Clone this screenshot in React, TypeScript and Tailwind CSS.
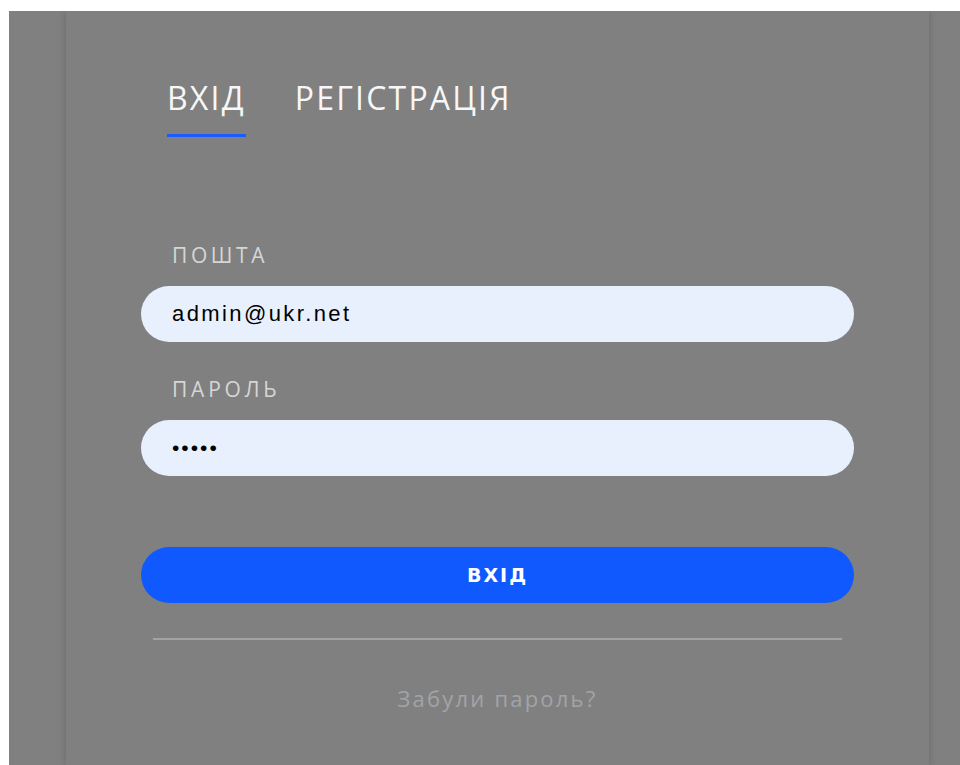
import { useState } from "react";

export default function App() {
  const [tab, setTab] = useState<"login" | "register">("login");
  const [email, setEmail] = useState("admin@ukr.net");
  const [password, setPassword] = useState("12345");

  return (
    <div className="min-h-screen bg-white pt-[11px] pl-[9px]">
      <div className="h-[754px] bg-[#808080] pl-[57px] overflow-hidden">
        <div className="w-[863px] h-full bg-[#808080] shadow-[0_0_8px_rgba(0,0,0,0.18)] px-[75px] pt-[66px] font-['Open_Sans',sans-serif]">
          {/* tabs */}
          <div className="flex items-start pl-[26px] gap-[49px]">
            <button
              onClick={() => setTab("login")}
              className="flex flex-col items-stretch text-[32px] leading-[41px] text-[#f7f7f7] tracking-[2.2px]"
            >
              <span>ВХІД</span>
              <span
                className={
                  tab === "login"
                    ? "mt-[16px] h-[3px] bg-[#1a5cff]"
                    : "mt-[16px] h-[3px] bg-transparent"
                }
              />
            </button>
            <button
              onClick={() => setTab("register")}
              className="flex flex-col items-stretch text-[32px] leading-[41px] text-[#f7f7f7] tracking-[2.2px]"
            >
              <span>РЕГІСТРАЦІЯ</span>
              <span
                className={
                  tab === "register"
                    ? "mt-[16px] h-[3px] bg-[#1a5cff]"
                    : "mt-[16px] h-[3px] bg-transparent"
                }
              />
            </button>
          </div>

          {/* form */}
          <form className="flex flex-col mt-[105px]" onSubmit={(e) => e.preventDefault()}>
            <label className="pl-[31px] text-[21px] leading-[26px] text-[#d6d6d6] tracking-[3.6px]">
              ПОШТА
            </label>
            <input
              value={email}
              onChange={(e) => setEmail(e.target.value)}
              className="mt-[18px] h-[56px] w-full rounded-full bg-[#e8f0fe] pl-[31px] text-[22px] text-black tracking-[2.4px] font-['Liberation_Sans',Arial,sans-serif] outline-none"
            />
            <label className="mt-[34px] pl-[31px] text-[21px] leading-[26px] text-[#d6d6d6] tracking-[3.8px]">
              ПАРОЛЬ
            </label>
            <input
              type="password"
              value={password}
              onChange={(e) => setPassword(e.target.value)}
              className="mt-[18px] h-[56px] w-full rounded-full bg-[#e8f0fe] pl-[31px] text-[21px] text-black tracking-[2px] font-['Liberation_Sans',Arial,sans-serif] outline-none"
            />
            <button
              type="submit"
              className="mt-[71px] h-[56px] w-full rounded-full bg-[#1059ff] text-white text-[19px] font-bold tracking-[2px] font-['DejaVu_Sans',sans-serif]"
            >
              ВХІД
            </button>
          </form>

          <div className="mt-[35px] mx-[12px] h-[2px] bg-[#a3a3a3]" />

          <div className="mt-[44px] text-center">
            <a className="text-[22px] leading-[29px] text-[#a0a4a8] tracking-[2.2px] cursor-pointer">
              Забули пароль?
            </a>
          </div>
        </div>
      </div>
    </div>
  );
}
